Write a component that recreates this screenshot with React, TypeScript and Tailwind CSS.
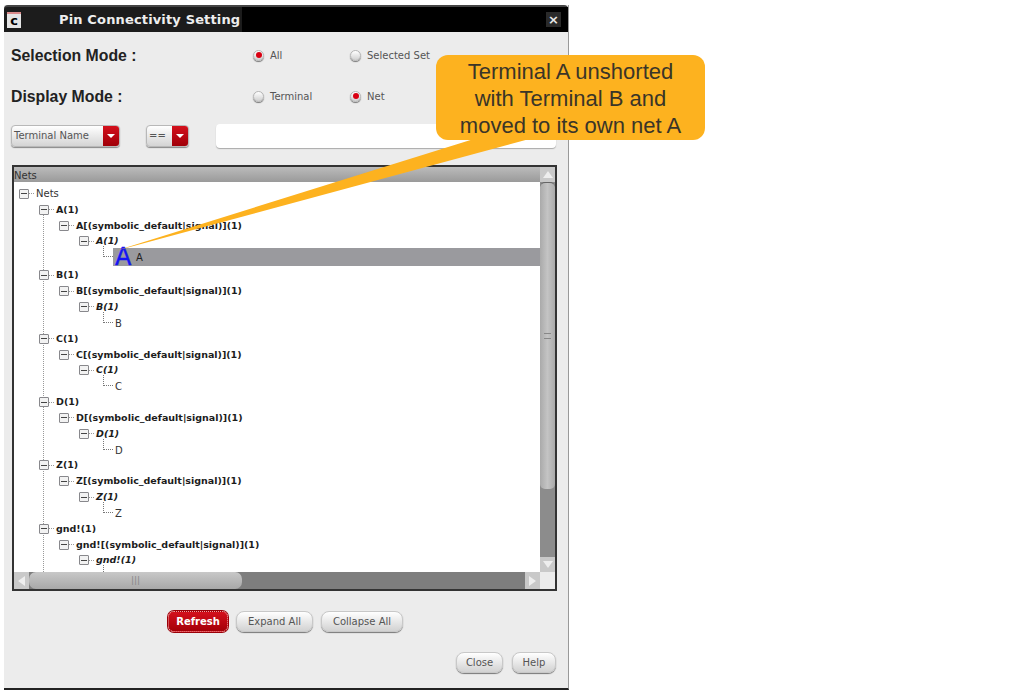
const ui = "font-['DejaVu_Sans',sans-serif]"

interface TreeRow {
  label: string
  level: number
  kind?: 'root' | 'net' | 'group' | 'term' | 'leaf'
  selected?: boolean
}

function netRows(name: string): TreeRow[] {
  return [
    { label: `${name}(1)`, level: 1, kind: 'net' },
    { label: `${name}[(symbolic_default|signal)](1)`, level: 2, kind: 'group' },
    { label: `${name}(1)`, level: 3, kind: 'term' },
    { label: name, level: 4, kind: 'leaf' },
  ]
}

const rows: TreeRow[] = [
  { label: 'Nets', level: 0, kind: 'root' },
  ...netRows('A').map((r) => (r.kind === 'leaf' ? { ...r, selected: true } : r)),
  ...netRows('B'),
  ...netRows('C'),
  ...netRows('D'),
  ...netRows('Z'),
  ...netRows('gnd!'),
]

function Expander() {
  return (
    <span className="flex h-[10px] w-[10px] shrink-0 items-center justify-center rounded-[1px] border border-[#88888c] bg-[#f2f2f2]">
      <span className="h-px w-[6px] bg-[#444]" />
    </span>
  )
}

function Row({ row }: { row: TreeRow }) {
  const boxLeft = [5, 25, 45, 65][row.level] ?? 0

  if (row.kind === 'leaf') {
    return (
      <div className={row.selected ? 'relative h-[18px]' : 'relative h-[15.85px]'}>
        <span className="absolute left-[89px] top-[-3px] h-[11px] w-[10px] border-b border-l border-dotted border-[#777]" />
        {row.selected ? (
          <div className="absolute left-[99px] right-0 top-[-1px] flex h-[18px] items-center bg-[#9a9a9e]">
            <span className="ml-[2px] w-[21px] text-[24px] font-normal leading-[18px] text-[#1414f5] [-webkit-text-stroke:0.4px_#1414f5]">A</span>
            <span className="text-[10px] text-[#222]">{row.label}</span>
          </div>
        ) : (
          <span className="absolute left-[101px] top-[2px] text-[10px] leading-[14px] text-[#333]">{row.label}</span>
        )}
      </div>
    )
  }

  return (
    <div className="relative flex h-[15.85px] items-center">
      <span className="absolute flex items-center" style={{ left: boxLeft }}>
        <Expander />
        <span className="w-[5px] border-t border-dotted border-[#999]" />
      </span>
      <span
        className={
          'absolute whitespace-nowrap leading-[14px] text-[#1c1c1c] ' +
          (row.kind === 'root'
            ? 'left-[22px] text-[10px] text-[#333]'
            : row.kind === 'net'
              ? 'left-[42px] text-[9.5px] font-bold'
              : row.kind === 'group'
                ? 'left-[62px] text-[9.5px] font-bold'
                : 'left-[82px] text-[9.5px] font-bold italic')
        }
      >
        {row.label}
      </span>
    </div>
  )
}

function Radio({ checked, label, width }: { checked?: boolean; label: string; width: string }) {
  return (
    <div className={`flex items-center gap-[6px] ${width}`}>
      <span className="flex h-[11px] w-[11px] items-center justify-center rounded-full border border-[#b5b5b5] bg-gradient-to-b from-white to-[#d0d0d0] shadow-[0_1px_1px_#777]">
        {checked && <span className="h-[6px] w-[6px] rounded-full bg-[#d90012]" />}
      </span>
      <span className="pt-px text-[10px] text-[#555]">{label}</span>
    </div>
  )
}

function Combo({ label, width }: { label: string; width: string }) {
  return (
    <div className={`flex h-[22px] items-stretch overflow-hidden rounded-[4px] border border-[#b8b8b8] bg-gradient-to-b from-white to-[#d4d4d4] shadow-[0_1px_1px_#888] ${width}`}>
      <span className="flex-1 truncate pl-[2px] text-[10px] leading-[20px] text-[#555]">{label}</span>
      <span className="flex w-[16px] items-center justify-center bg-gradient-to-b from-[#d4101c] to-[#a00008]">
        <span className="h-0 w-0 border-x-[4px] border-t-[4px] border-x-transparent border-t-white" />
      </span>
    </div>
  )
}

function Button({ label, width, primary }: { label: string; width: string; primary?: boolean }) {
  return (
    <button
      className={
        primary
          ? `h-[21px] rounded-[6px] border border-dotted border-[#f0a0a0] bg-gradient-to-b from-[#d4101c] to-[#a40008] text-[10px] font-bold text-white shadow-[0_0_0_1px_#9a0008] ${width}`
          : `h-[21px] rounded-[8px] border border-[#c8c8c8] bg-gradient-to-b from-white to-[#d2d2d2] text-[10px] text-[#555] shadow-[0_1px_1px_#777] ${width}`
      }
    >
      {label}
    </button>
  )
}

export default function App() {
  return (
    <div className={`relative h-[695px] w-[1013px] overflow-hidden bg-white pl-[4px] pt-[5px] ${ui}`}>
      <div className="flex h-[685px] w-[565px] flex-col border-b-2 border-r border-b-[#222] border-r-[#999] bg-[#ececec]">
        {/* Title bar */}
        <header className="flex h-[27px] shrink-0 items-center rounded-t-[4px] border-t-2 border-[#444] bg-[#1c1c1c]">
          <span className="ml-[3px] flex h-[16px] w-[14px] items-center justify-center border-t-2 border-[#d98a8a] bg-[#e4e4e4] text-[13px] font-bold leading-none text-black">c</span>
          <span className="ml-[38px] w-[183px] whitespace-nowrap text-[13px] font-bold tracking-[0.15px] text-[#eee]">Pin Connectivity Setting</span>
          <div className="flex h-full flex-1 items-center justify-end bg-black">
            <span className="mr-[7px] flex h-[15px] w-[15px] items-center justify-center bg-[#2a2a2a] text-[13px] font-bold leading-none text-[#e8e8e8]">×</span>
          </div>
        </header>

        <div className="flex flex-1 flex-col px-[7px]">
          <div className="mt-[13px] flex h-[20px] items-center">
            <span className="w-[242px] pt-px font-['Liberation_Sans',sans-serif] text-[15.8px] font-bold text-[#222]">Selection Mode :</span>
            <Radio checked label="All" width="w-[97px]" />
            <Radio label="Selected Set" width="w-[100px]" />
          </div>
          <div className="mt-[21px] flex h-[20px] items-center">
            <span className="w-[242px] pt-px font-['Liberation_Sans',sans-serif] text-[15.8px] font-bold text-[#222]">Display Mode :</span>
            <Radio label="Terminal" width="w-[97px]" />
            <Radio checked label="Net" width="w-[100px]" />
          </div>

          <div className="mt-[18px] flex h-[24px] items-center">
            <Combo label="Terminal Name" width="w-[109px]" />
            <div className="ml-[26px]">
              <Combo label="==" width="w-[43px]" />
            </div>
            <div className="ml-[27px] h-[24px] w-[340px] rounded-[4px] bg-white shadow-[0_1px_1px_#aaa]" />
          </div>

          {/* Nets tree */}
          <div className="ml-px mt-[17px] flex h-[426px] w-[545px] flex-col border-2 border-[#333] bg-white">
            <div className="flex min-h-0 flex-1">
              <div className="flex min-w-0 flex-1 flex-col">
                <div className="h-[15px] shrink-0 bg-gradient-to-b from-[#bbb] to-[#9a9a9a] text-[10px] leading-[17px] text-[#333]">Nets</div>
                <div className="relative min-h-0 flex-1 overflow-hidden pt-[4px]">
                  <span className="absolute bottom-0 left-[29px] top-[30px] border-l border-dotted border-[#999]" />
                  {rows.map((row, i) => (
                    <Row key={i} row={row} />
                  ))}
                </div>
              </div>
              {/* Vertical scrollbar */}
              <div className="flex w-[15px] shrink-0 flex-col bg-[#8c8c8c]">
                <div className="flex h-[15px] items-center justify-center bg-[#c9c9c9]">
                  <span className="h-0 w-0 border-x-[5px] border-b-[7px] border-x-transparent border-b-[#eee]" />
                </div>
                <div className="relative h-[307px] rounded-[5px] border-t border-[#666] bg-gradient-to-r from-[#aaa] via-[#c4c4c4] to-[#aaa]">
                  <span className="absolute left-[4px] top-[150px] h-[6px] w-[7px] border-y border-[#888]" />
                </div>
                <div className="flex-1" />
                <div className="flex h-[15px] items-center justify-center bg-[#c9c9c9]">
                  <span className="h-0 w-0 border-x-[5px] border-t-[7px] border-x-transparent border-t-[#eee]" />
                </div>
              </div>
            </div>
            {/* Horizontal scrollbar */}
            <div className="flex h-[17px] shrink-0 items-stretch bg-[#7e7e7e]">
              <div className="flex w-[15px] items-center justify-center bg-[#c9c9c9]">
                <span className="h-0 w-0 border-y-[5px] border-r-[7px] border-y-transparent border-r-[#eee]" />
              </div>
              <div className="flex w-[213px] items-center justify-center rounded-[7px] bg-gradient-to-b from-[#c8c8c8] to-[#a8a8a8] text-[9px] leading-none text-[#888]">|||</div>
              <div className="flex-1" />
              <div className="flex w-[15px] items-center justify-center bg-[#c9c9c9]">
                <span className="h-0 w-0 border-y-[5px] border-l-[7px] border-y-transparent border-l-[#eee]" />
              </div>
              <div className="w-[15px] bg-[#ececec]" />
            </div>
          </div>

          <div className="ml-[157px] mt-[20px] flex gap-[8px]">
            <Button primary label="Refresh" width="w-[60px]" />
            <Button label="Expand All" width="w-[77px]" />
            <Button label="Collapse All" width="w-[82px]" />
          </div>

          <div className="ml-[445px] mt-[20px] flex gap-[9px]">
            <Button label="Close" width="w-[47px]" />
            <Button label="Help" width="w-[44px]" />
          </div>
        </div>
      </div>

      {/* Callout */}
      <svg className="absolute left-0 top-0" width="1013" height="695" viewBox="0 0 1013 695">
        <polygon points="115,251 477,138 533,138" fill="#fdb21f" />
      </svg>
      <div className="absolute left-[436px] top-[55px] flex h-[85px] w-[269px] items-center justify-center rounded-[12px] bg-[#fdb21f] pt-[2px] text-center font-['Liberation_Sans',sans-serif] text-[22px] leading-[27px] text-[#3a3528]">
        <span>
          Terminal A unshorted
          <br />
          with Terminal B and
          <br />
          moved to its own net A
        </span>
      </div>
    </div>
  )
}
